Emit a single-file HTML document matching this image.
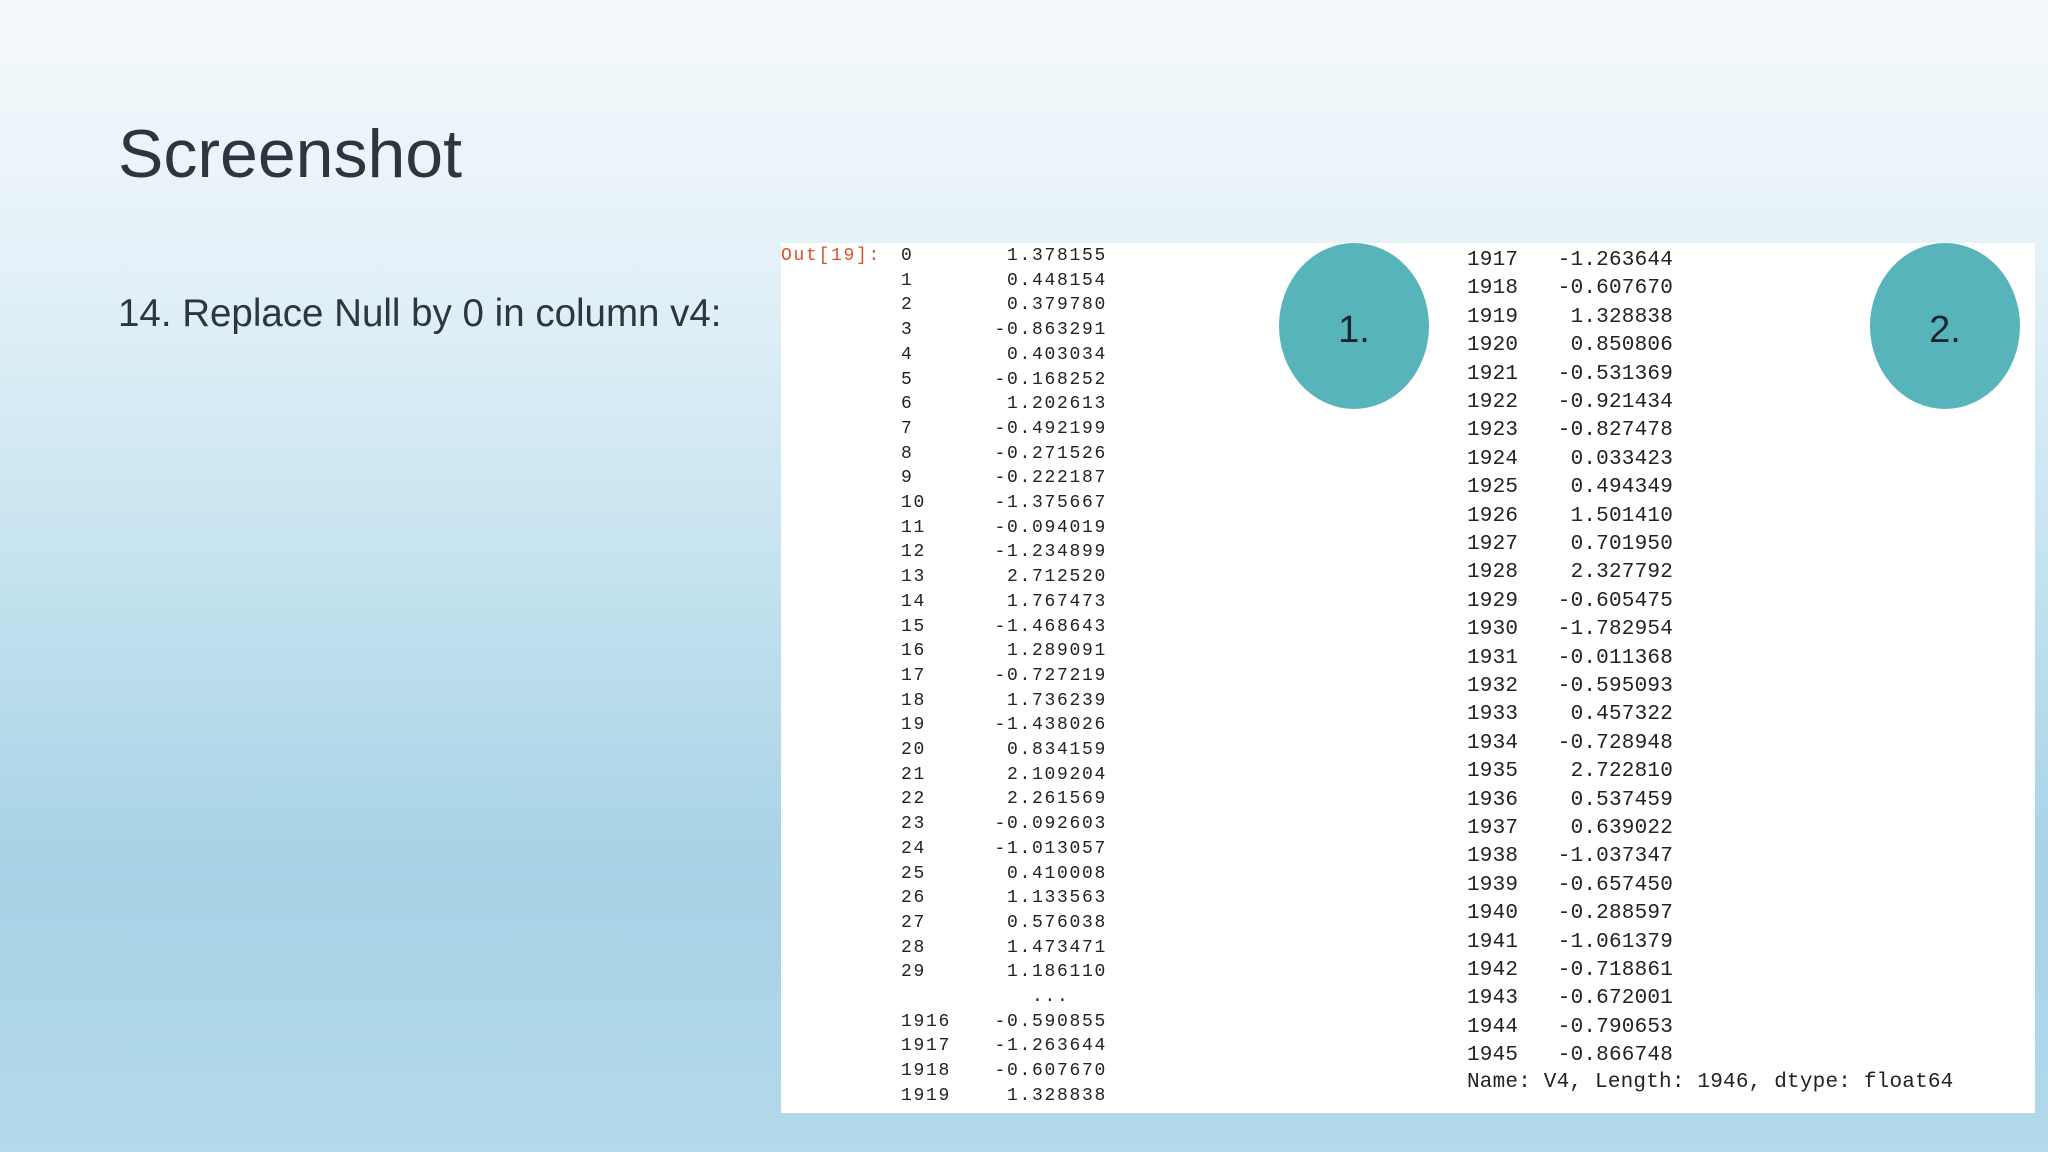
<!DOCTYPE html>
<html><head><meta charset="utf-8"><style>
html,body{margin:0;padding:0}
body{width:2048px;height:1152px;overflow:hidden;position:relative;
background:linear-gradient(180deg,#f5f9fc 0%,#e2f0f7 25%,#c4e2ef 50%,#a7d3e6 75%,#b3d9ea 100%);
font-family:"Liberation Sans",sans-serif}
.t{position:absolute;left:118px;top:114px;font-size:68px;color:#2e3440;line-height:80px}
.s{position:absolute;left:118px;top:292px;font-size:38.5px;color:#2e3440;line-height:44px}
.panel{position:absolute;left:781px;top:243px;width:1254px;height:870px;background:#fff;overflow:hidden}
.r{position:absolute;font-family:"Liberation Mono",monospace;color:#222;white-space:pre;line-height:24px}
.l{font-size:18px;letter-spacing:1.7px}
.g{font-size:21px;letter-spacing:0.2px}
.c{position:absolute;border-radius:50%;background:#57b4bb;color:#1e2530;font-size:38px;display:flex;align-items:center;justify-content:center;padding-top:8px;box-sizing:border-box}
</style></head><body>
<div class="t">Screenshot</div>
<div class="s">14. Replace Null by 0 in column v4:</div>
<div class="panel" id="p">
<div class="r l" style="left:0;top:1px;color:#d9542b">Out[19]:</div>
</div>
<div class="c" style="left:1279px;top:243px;width:150px;height:166px">1.</div>
<div class="c" style="left:1870px;top:243px;width:150px;height:166px">2.</div>
<script>
var p=document.getElementById('p');
var L=[["0","1.378155"],["1","0.448154"],["2","0.379780"],["3","-0.863291"],["4","0.403034"],["5","-0.168252"],["6","1.202613"],["7","-0.492199"],["8","-0.271526"],["9","-0.222187"],["10","-1.375667"],["11","-0.094019"],["12","-1.234899"],["13","2.712520"],["14","1.767473"],["15","-1.468643"],["16","1.289091"],["17","-0.727219"],["18","1.736239"],["19","-1.438026"],["20","0.834159"],["21","2.109204"],["22","2.261569"],["23","-0.092603"],["24","-1.013057"],["25","0.410008"],["26","1.133563"],["27","0.576038"],["28","1.473471"],["29","1.186110"],["","...   "],["1916","-0.590855"],["1917","-1.263644"],["1918","-0.607670"],["1919","1.328838"],["1920","0.850806"]];
var h='';
L.forEach(function(r,i){var y=253-243+i*24.7-9;
h+='<div class="r l" style="left:'+(901-781)+'px;top:'+y+'px">'+r[0]+'</div>';
h+='<div class="r l" style="right:'+(2035-1107)+'px;top:'+y+'px">'+r[1]+'</div>';});
var R=[["1917","-1.263644"],["1918","-0.607670"],["1919","1.328838"],["1920","0.850806"],["1921","-0.531369"],["1922","-0.921434"],["1923","-0.827478"],["1924","0.033423"],["1925","0.494349"],["1926","1.501410"],["1927","0.701950"],["1928","2.327792"],["1929","-0.605475"],["1930","-1.782954"],["1931","-0.011368"],["1932","-0.595093"],["1933","0.457322"],["1934","-0.728948"],["1935","2.722810"],["1936","0.537459"],["1937","0.639022"],["1938","-1.037347"],["1939","-0.657450"],["1940","-0.288597"],["1941","-1.061379"],["1942","-0.718861"],["1943","-0.672001"],["1944","-0.790653"],["1945","-0.866748"]];
R.forEach(function(r,i){var y=257-243+i*28.4-8;
h+='<div class="r g" style="left:'+(1467-781)+'px;top:'+y+'px">'+r[0]+'</div>';
h+='<div class="r g" style="right:'+(2035-1673)+'px;top:'+y+'px">'+r[1]+'</div>';});
h+='<div class="r g" style="left:'+(1467-781)+'px;top:'+(1081-243-10)+'px">Name: V4, Length: 1946, dtype: float64</div>';
p.insertAdjacentHTML('beforeend',h);
</script>
</body></html>
